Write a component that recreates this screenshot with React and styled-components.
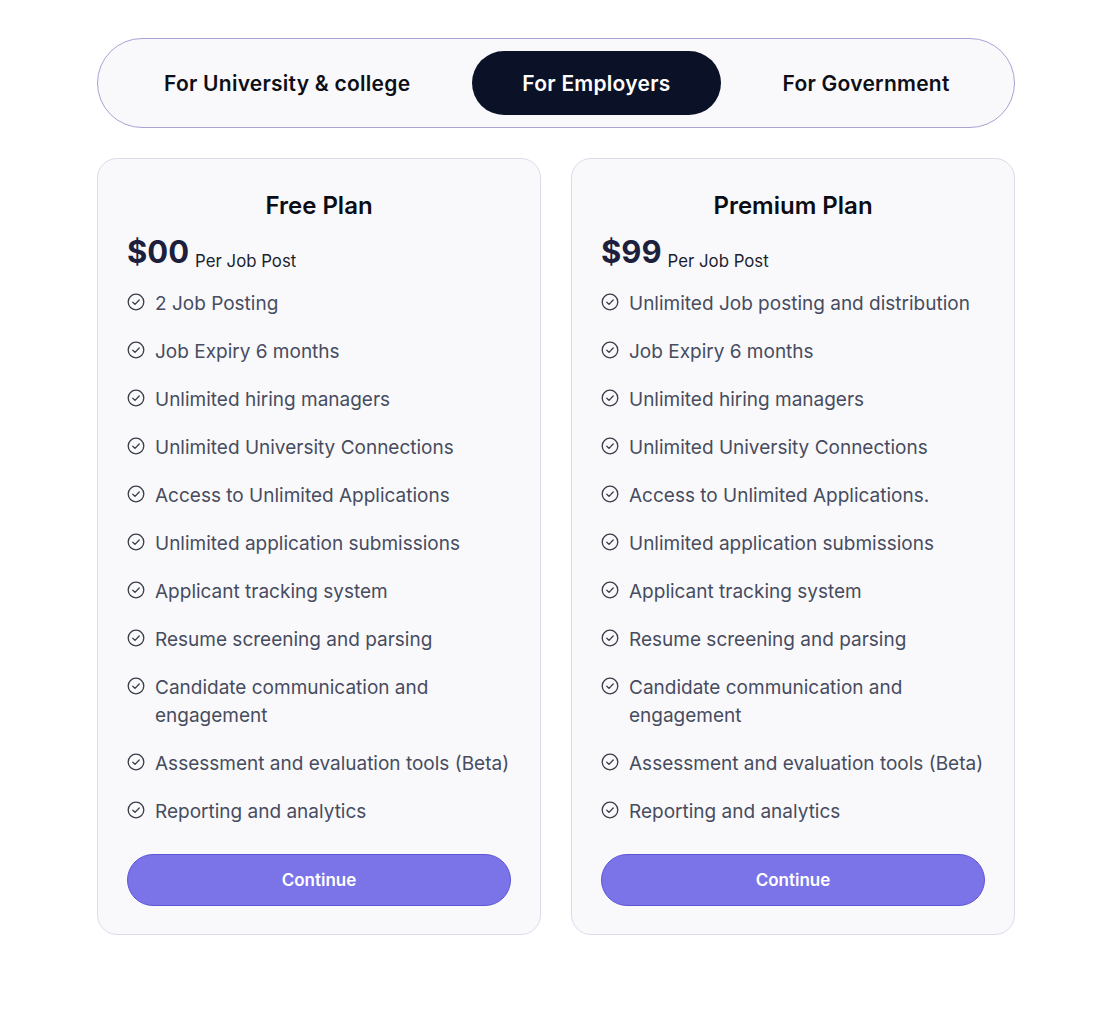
import React, { useState } from 'react';
import styled, { createGlobalStyle } from 'styled-components';

const GlobalStyle = createGlobalStyle`
  body {
    margin: 0;
    background: #ffffff;
    font-family: Inter, "Noto Sans", sans-serif;
  }
`;

const tabs = ['For University & college', 'For Employers', 'For Government'];

const plans = [
  {
    name: 'Free Plan',
    price: '$00',
    features: [
      '2 Job Posting',
      'Job Expiry 6 months',
      'Unlimited hiring managers',
      'Unlimited University Connections',
      'Access to Unlimited Applications',
      'Unlimited application submissions',
      'Applicant tracking system',
      'Resume screening and parsing',
      'Candidate communication and engagement',
      'Assessment and evaluation tools (Beta)',
      'Reporting and analytics',
    ],
  },
  {
    name: 'Premium Plan',
    price: '$99',
    features: [
      'Unlimited Job posting and distribution',
      'Job Expiry 6 months',
      'Unlimited hiring managers',
      'Unlimited University Connections',
      'Access to Unlimited Applications.',
      'Unlimited application submissions',
      'Applicant tracking system',
      'Resume screening and parsing',
      'Candidate communication and engagement',
      'Assessment and evaluation tools (Beta)',
      'Reporting and analytics',
    ],
  },
];

const CheckIcon = () => (
  <svg width="18" height="18" viewBox="0 0 18 18" fill="none">
    <circle cx="9" cy="9" r="7.8" stroke="#3a3d48" strokeWidth="1.3" />
    <path d="M5.8 9.2l2.2 2.2 4.2-4.4" stroke="#3a3d48" strokeWidth="1.3" strokeLinecap="round" strokeLinejoin="round" />
  </svg>
);

const App = () => {
  const [active, setActive] = useState(1);
  return (
    <>
      <GlobalStyle />
      <Page>
        <TabBar>
          {tabs.map((t, i) => (
            <Tab key={t} $active={i === active} onClick={() => setActive(i)}>
              {t}
            </Tab>
          ))}
        </TabBar>
        <Cards>
          {plans.map((p) => (
            <Card key={p.name}>
              <Title>{p.name}</Title>
              <PriceRow>
                <Price>{p.price}</Price>
                <Per>Per Job Post</Per>
              </PriceRow>
              <Features>
                {p.features.map((f) => (
                  <Feature key={f}>
                    <IconWrap>
                      <CheckIcon />
                    </IconWrap>
                    <span>{f}</span>
                  </Feature>
                ))}
              </Features>
              <Button>Continue</Button>
            </Card>
          ))}
        </Cards>
      </Page>
    </>
  );
};

const Page = styled.div`
  width: 918px;
  margin: 38px 0 0 97px;
`;

const TabBar = styled.div`
  display: flex;
  align-items: center;
  gap: 12px;
  height: 90px;
  box-sizing: border-box;
  padding: 0 15px 0 16px;
  border: 1px solid #a7a3d3;
  border-radius: 46px;
  background: #f9f9fc;
`;

const Tab = styled.button`
  height: 64px;
  padding: 0 50px;
  border: none;
  border-radius: 32px;
  cursor: pointer;
  font-family: Inter, sans-serif;
  font-size: 21px;
  letter-spacing: 0.25px;
  font-weight: 600;
  white-space: nowrap;
  background: ${(p) => (p.$active ? '#0b1228' : 'transparent')};
  color: ${(p) => (p.$active ? '#ffffff' : '#0e0f16')};
`;

const Cards = styled.div`
  display: grid;
  grid-template-columns: 1fr 1fr;
  gap: 30px;
  margin-top: 30px;
`;

const Card = styled.div`
  box-sizing: border-box;
  padding: 30px 29px 28px 29px;
  border: 1px solid #dcdbeb;
  border-radius: 20px;
  background: #f9f9fc;
  display: flex;
  flex-direction: column;
`;

const Title = styled.h2`
  margin: 0;
  text-align: center;
  font-size: 24px;
  line-height: 34px;
  font-weight: 600;
  color: #0c0d14;
`;

const PriceRow = styled.div`
  display: flex;
  align-items: baseline;
  gap: 6px;
  margin-top: 8px;
`;

const Price = styled.span`
  font-size: 31px;
  font-weight: 700;
  color: #1d1f3c;
  line-height: 42px;
`;

const Per = styled.span`
  position: relative;
  top: 4px;
  font-size: 16.8px;
  color: #1d1f2c;
`;

const Features = styled.ul`
  list-style: none;
  margin: 17px 0 0;
  padding: 0;
  display: flex;
  flex-direction: column;
  gap: 20px;
`;

const Feature = styled.li`
  display: flex;
  align-items: flex-start;
  gap: 10px;
  font-size: 19px;
  line-height: 28px;
  color: #474c5e;
`;

const IconWrap = styled.span`
  display: flex;
  flex-shrink: 0;
  padding-top: 3px;
`;

const Button = styled.button`
  margin-top: 28px;
  height: 52px;
  border: 1px solid #5e56d4;
  border-radius: 26px;
  background: #7b74e9;
  color: #ffffff;
  font-family: Inter, sans-serif;
  font-size: 17px;
  font-weight: 600;
  cursor: pointer;
`;

export default App;
